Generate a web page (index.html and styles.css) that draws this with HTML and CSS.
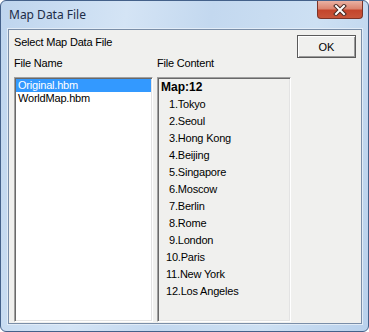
FILE: index.html
```html
<!DOCTYPE html>
<html>
<head>
  <meta charset="UTF-8">
  <title>Map Data File</title>
  <link rel="stylesheet" href="styles.css">
</head>
<body>
  <div class="window">
    <div class="titlebar">
      <span class="title">Map Data File</span>
      <div class="close">
        <svg width="14" height="12" viewBox="0 0 14 12">
          <path d="M3 2 L11 10 M11 2 L3 10" stroke="#4a2a24" stroke-width="4" stroke-linecap="square"/>
          <path d="M3 2 L11 10 M11 2 L3 10" stroke="#fff" stroke-width="2" stroke-linecap="square"/>
        </svg>
      </div>
    </div>
    <div class="frame">
      <div class="client">
        <div class="main">
          <div class="caption">Select Map Data File</div>
          <div class="columns">
            <!-- File list -->
            <div class="col col-files">
              <div class="label">File Name</div>
              <ul class="listbox">
                <li class="selected">Original.hbm</li>
                <li>WorldMap.hbm</li>
              </ul>
            </div>
            <!-- Content preview -->
            <div class="col col-content">
              <div class="label">File Content</div>
              <div class="content-box">
                <div class="map-title">Map:12</div>
                <div class="row one">1.Tokyo</div>
                <div class="row one">2.Seoul</div>
                <div class="row one">3.Hong Kong</div>
                <div class="row one">4.Beijing</div>
                <div class="row one">5.Singapore</div>
                <div class="row one">6.Moscow</div>
                <div class="row one">7.Berlin</div>
                <div class="row one">8.Rome</div>
                <div class="row one">9.London</div>
                <div class="row">10.Paris</div>
                <div class="row">11.New York</div>
                <div class="row">12.Los Angeles</div>
              </div>
            </div>
          </div>
        </div>
        <button class="ok">OK</button>
      </div>
    </div>
  </div>
</body>
</html>
```

FILE: styles.css
```css
body {
  margin: 0;
  background: #fff;
}
/* Window frame */
.window {
  width: 369px;
  height: 332px;
  box-sizing: border-box;
  border: 1px solid #44618a;
  border-radius: 6px;
  display: flex;
  flex-direction: column;
  background: linear-gradient(100deg, #bed5ee 0%, #d4e4f5 30%, #c3d8ef 50%, #cde0f3 75%, #b9d1ec 100%);
  overflow: hidden;
}
.titlebar {
  height: 28px;
  display: flex;
  align-items: flex-start;
  padding-left: 8px;
}
.title {
  line-height: 28px;
  font-family: "Noto Sans", "Open Sans", sans-serif;
  font-size: 12px;
  color: #1c2c48;
}
.close {
  margin-left: auto;
  margin-right: 5px;
  width: 46px;
  height: 18px;
  box-sizing: border-box;
  border: 1px solid #7c3327;
  border-top: none;
  border-radius: 0 0 4px 4px;
  background: linear-gradient(to bottom, #eab1a3 0%, #dc8570 45%, #c4452c 55%, #c8553a 100%);
  display: flex;
  align-items: center;
  justify-content: center;
}
.frame {
  flex: 1;
  display: flex;
  padding: 0 6px 7px 7px;
}
/* Dialog client area */
.client {
  flex: 1;
  display: flex;
  gap: 6px;
  padding: 5px 5px 1px 5px;
  border: 1px solid #7a8ea8;
  box-shadow: 0 0 0 1px #e2ecf7;
  background: #f0f0ee;
  font-family: "Liberation Sans", Arial, sans-serif;
  font-size: 11px;
  letter-spacing: -0.2px;
  color: #000;
}
.main {
  flex: 1;
  display: flex;
  flex-direction: column;
}
.caption {
  margin-top: 1px;
  line-height: 13px;
}
.columns {
  flex: 1;
  display: flex;
  gap: 4px;
  margin-top: 8px;
}
.col {
  display: flex;
  flex-direction: column;
}
.col-files {
  width: 139px;
}
.col-content {
  flex: 1;
}
.label {
  line-height: 13px;
  margin-bottom: 7px;
}
.listbox,
.content-box {
  flex: 1;
  margin: 0;
  box-sizing: border-box;
  border-top: 1px solid #a0a0a0;
  border-left: 1px solid #a0a0a0;
  border-right: 1px solid #fff;
  border-bottom: 1px solid #fff;
  box-shadow: inset 1px 1px #696969, inset -1px -1px #e3e3e3;
}
.listbox {
  list-style: none;
  padding: 1px 1px;
  background: #fff;
}
.listbox li {
  line-height: 13px;
  padding-left: 2px;
}
.listbox li.selected {
  background: #3399ff;
  color: #fff;
}
.content-box {
  padding: 1px 2px 0 3px;
  background: #f0f0ee;
}
.map-title {
  font-weight: bold;
  font-size: 12px;
  letter-spacing: 0;
  line-height: 17px;
}
.row {
  line-height: 17px;
  padding-left: 5px;
}
.row.one {
  padding-left: 8px;
}
/* OK button */
.ok {
  width: 59px;
  height: 23px;
  padding: 0;
  border: 1px solid #5a5a5a;
  border-radius: 0;
  background: #f0f0ee;
  box-shadow: inset 1px 1px #fff, inset -1px -1px #9a9a9a;
  font-family: "Liberation Sans", Arial, sans-serif;
  font-size: 11px;
  color: #000;
}
```
